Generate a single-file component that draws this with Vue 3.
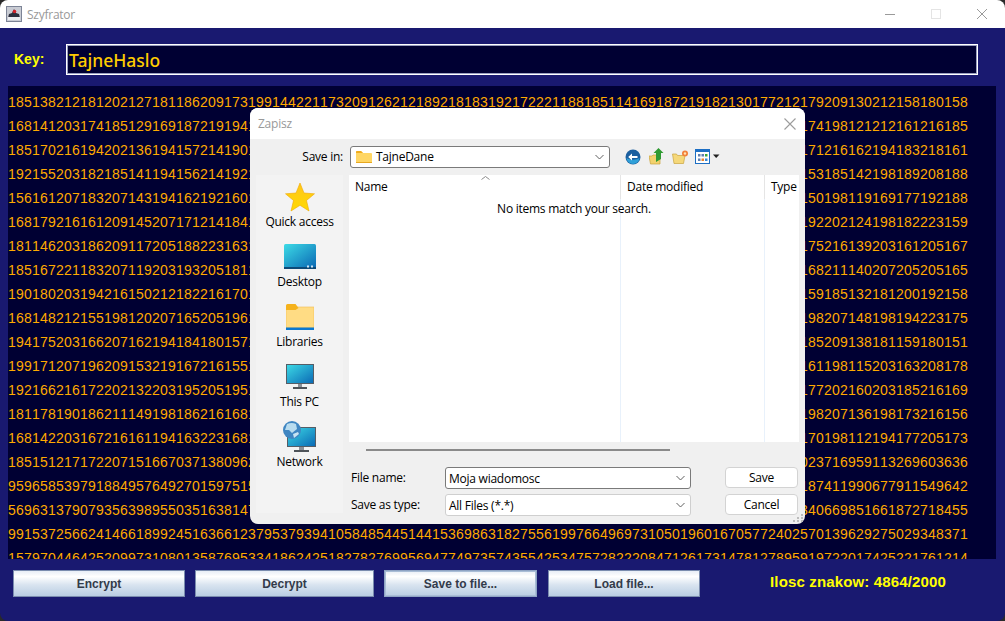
<script setup>
const top = '185138212181202127181186209173199144221173209126212189218183192172221188185114169187219182130177212179209130212158180158'
const sides = [
  ['1681412031741851291691872191941', '174198121212161216185'],
  ['1851702161942021361941572141901', '171216162194183218161'],
  ['1921552031821851411941562141921', '153185142198189208188'],
  ['1561612071832071431941621921601', '150198119169177192188'],
  ['1681792161612091452071712141841', '192202124198182223159'],
  ['1811462031862091172051882231631', '175216139203161205167'],
  ['1851672211832071192031932051811', '168211140207205205165'],
  ['1901802031942161502121822161701', '159185132181200192158'],
  ['1681482121551981202071652051961', '198207148198194223175'],
  ['1941752031662071621941841801571', '185209138181159180151'],
  ['1991712071962091532191672161551', '161198115203163208178'],
  ['1921662161722021322031952051951', '177202160203185216169'],
  ['1811781901862111491981862161681', '198207136198173216156'],
  ['1681422031672161611941632231681', '170198112194177205173'],
  ['1851512171722071516670371380962', '023716959113269603636'],
  ['9596585397918849576492701597515', '187411990677911549642'],
  ['5696313790793563989550351638147', '340669851661872718455']
]
const lines = [
  [top],
  ...sides,
  ['991537256624146618992451636612379537939410584854451441536986318275561997664969731050196016705772402570139629275029348371'],
  ['157970446425209973108013587695334186242518278276995694774973574355425347572822208471261731478127895919722017425221761214']
]
const actions = [
  { label: 'Encrypt', cls: 'w1' },
  { label: 'Decrypt', cls: 'w2' },
  { label: 'Save to file...', cls: 'w3 focus' },
  { label: 'Load file...', cls: 'w4' }
]
</script>

<template>
  <div class="win">
    <header class="titlebar">
      <svg class="appicon" width="16" height="16" viewBox="0 0 16 16">
        <rect x="0.5" y="0.5" width="15" height="15" fill="#c9ccd4" stroke="#7d8496"/>
        <path d="M2 12 L3 8 L6 7 L8 3 L10 7 L13 8 L14 12Z" fill="#2c2f3d"/>
        <rect x="2" y="11" width="12" height="3" fill="#eceef2"/>
        <circle cx="8.5" cy="5.5" r="1.8" fill="#d4222a"/>
      </svg>
      <span class="apptitle">Szyfrator</span>
      <div class="winctl">
        <svg width="12" height="12" viewBox="0 0 12 12"><path d="M1 6.5H11" stroke="#9a9a9a" stroke-width="1"/></svg>
        <svg width="12" height="12" viewBox="0 0 12 12"><rect x="1.5" y="1.5" width="9" height="9" fill="none" stroke="#e4e4e4"/></svg>
        <svg width="12" height="12" viewBox="0 0 12 12"><path d="M1 1L11 11M11 1L1 11" stroke="#9a9a9a" stroke-width="1"/></svg>
      </div>
    </header>

    <main class="main">
      <div class="keyrow">
        <label class="keylabel">Key:</label>
        <div class="keyfield">TajneHaslo</div>
      </div>

      <div class="digits">
        <div v-for="(l, i) in lines" :key="i" class="line">
          <span v-for="(part, j) in l" :key="j">{{ part }}</span>
        </div>
      </div>

      <div class="actions">
        <button v-for="a in actions" :key="a.label" class="mbtn" :class="a.cls">{{ a.label }}</button>
        <span class="count">Ilosc znakow: 4864/2000</span>
      </div>

      <section class="dlg">
        <div class="dlg-title">
          <span>Zapisz</span>
          <svg width="14" height="14" viewBox="0 0 14 14"><path d="M1.5 1.5L12.5 12.5M12.5 1.5L1.5 12.5" stroke="#9c9c9c" stroke-width="1.1"/></svg>
        </div>
        <div class="dlg-body">
          <div class="toolbar">
            <span class="savein">Save in:</span>
            <div class="combo pathcombo">
              <svg width="16" height="13" viewBox="0 0 16 13">
                <path d="M0 2a1 1 0 0 1 1-1h4l2 2h8a1 1 0 0 1 1 1v8a1 1 0 0 1-1 1H1a1 1 0 0 1-1-1Z" fill="#ffd664"/>
                <path d="M0 2a1 1 0 0 1 1-1h4l2 2H0Z" fill="#f0ac1e"/>
                <rect x="0" y="12" width="16" height="1" fill="#e8a820"/>
              </svg>
              <span class="ctext">TajneDane</span>
              <svg class="chev" width="9" height="6" viewBox="0 0 9 6"><path d="M0.5 1L4.5 5L8.5 1" fill="none" stroke="#606060"/></svg>
            </div>
            <div class="tools">
              <svg width="16" height="16" viewBox="0 0 16 16">
                <circle cx="8" cy="8" r="7.5" fill="#1c5f9f"/>
                <path d="M1.5 9a6.5 6 0 0 0 13 0a8 4 0 0 1-13 0Z" fill="#2fa0d8"/>
                <path d="M12.5 7H7V4.5L3.2 8L7 11.5V9h5.5Z" fill="#fff"/>
              </svg>
              <svg width="15" height="17" viewBox="0 0 15 17">
                <path d="M0 8h3l1-1h7v9H1.5Z" fill="#f3d26e" stroke="#c9a33e" stroke-width="0.7"/>
                <path d="M7 14V5H4.5L9.5 0L14.5 5H12v6Z" fill="#2f9a32"/>
              </svg>
              <svg width="17" height="14" viewBox="0 0 17 14">
                <path d="M0.5 4h4l1 1.5H13L11.5 13.5H2Z" fill="#f5d87a" stroke="#c9a33e" stroke-width="0.7"/>
                <circle cx="13" cy="3.5" r="3" fill="#f2803a"/>
                <circle cx="13" cy="3.5" r="1.2" fill="#ffe3b0"/>
              </svg>
              <svg class="viewicon" width="25" height="15" viewBox="0 0 25 15">
                <rect x="0.5" y="0.5" width="14" height="14" fill="#fff" stroke="#1d6fc4"/>
                <rect x="0.5" y="0.5" width="14" height="2.5" fill="#1d6fc4"/>
                <rect x="3" y="5" width="2.5" height="2.5" fill="#5f7fb0"/><rect x="6.5" y="5" width="2.5" height="2.5" fill="#5f7fb0"/><rect x="10" y="5" width="2.5" height="2.5" fill="#38a838"/>
                <rect x="3" y="9.5" width="2.5" height="2.5" fill="#5f7fb0"/><rect x="6.5" y="9.5" width="2.5" height="2.5" fill="#e8842c"/><rect x="10" y="9.5" width="2.5" height="2.5" fill="#3a8ad8"/>
                <path d="M18 5.5H24.5L21.2 9Z" fill="#222"/>
              </svg>
            </div>
          </div>

          <div class="panes">
            <nav class="places">
              <div class="place">
                <svg width="30" height="30" viewBox="0 0 30 30">
                  <defs><linearGradient id="star" x1="0" y1="0" x2="0" y2="1"><stop offset="0" stop-color="#ffc61a"/><stop offset="1" stop-color="#ffd900"/></linearGradient></defs>
                  <path d="M15 1L19 11L29.500 11.800L21.500 18.500L24 29L15 23.300L6 29L8.500 18.500L0.500 11.800L11 11Z" fill="url(#star)" stroke="#f0a800" stroke-width="0.6"/>
                </svg>
                <span>Quick access</span>
              </div>
              <div class="place">
                <svg width="32" height="26" viewBox="0 0 32 26">
                  <defs><linearGradient id="scr" x1="0" y1="0" x2="1" y2="1"><stop offset="0" stop-color="#3ddbe6"/><stop offset="1" stop-color="#0a68b4"/></linearGradient></defs>
                  <rect x="0" y="0" width="32" height="24" rx="1.500" fill="url(#scr)"/>
                  <rect x="0" y="23" width="32" height="2" fill="#0d4a78"/>
                  <rect x="23" y="21.500" width="2" height="2" fill="#cfe6f5"/><rect x="27" y="21.500" width="2" height="2" fill="#cfe6f5"/>
                </svg>
                <span>Desktop</span>
              </div>
              <div class="place">
                <svg width="28" height="26" viewBox="0 0 28 26">
                  <rect x="0" y="3" width="28" height="21" fill="#ffdc84" stroke="#f2bd52" stroke-width="0.6"/>
                  <path d="M0 1.500a1.500 1.500 0 0 1 1.500-1.500h8l3 4l-3 2H0Z" fill="#f5b21c"/>
                  <rect x="0" y="23.500" width="28" height="2.500" fill="#0a78d0"/>
                </svg>
                <span>Libraries</span>
              </div>
              <div class="place">
                <svg width="28" height="26" viewBox="0 0 28 26">
                  <rect x="0.500" y="0.500" width="27" height="19" fill="url(#scr)" stroke="#555d66"/>
                  <rect x="12" y="20" width="4" height="3" fill="#8a9098"/>
                  <rect x="7" y="23" width="14" height="2" fill="#4d5258"/>
                </svg>
                <span>This PC</span>
              </div>
              <div class="place">
                <svg width="33" height="32" viewBox="0 0 33 32">
                  <rect x="4.500" y="6.500" width="28" height="19" fill="url(#scr)" stroke="#555d66"/>
                  <rect x="16" y="26" width="5" height="3" fill="#8a9098"/>
                  <rect x="11" y="29" width="15" height="2" fill="#4d5258"/>
                  <circle cx="9" cy="9" r="9" fill="#3f86c2"/>
                  <path d="M4 3Q9 1 13 3L14 8L9 12L6 9L2 9Z" fill="#b8dcef"/>
                  <path d="M10 13L15 11L16 13L11 17Z" fill="#c8e4f2"/>
                </svg>
                <span>Network</span>
              </div>
            </nav>

            <div class="rightcol">
              <div class="list">
                <div class="listhead">
                  <span class="c1">Name
                    <svg class="sort" width="9" height="4" viewBox="0 0 9 4"><path d="M0.500 3.500L4.500 0.500L8.500 3.500" fill="none" stroke="#8a8a8a"/></svg>
                  </span>
                  <span class="c2">Date modified</span>
                  <span class="c3">Type</span>
                </div>
                <div class="listbody">
                  <i class="sep s1"></i><i class="sep s2"></i>
                  <p class="empty">No items match your search.</p>
                </div>
              </div>
              <div class="hscroll"></div>
              <div class="form">
                <span class="flabel">File name:</span>
                <div class="combo focused"><span>Moja wiadomosc</span>
                  <svg class="chev" width="9" height="6" viewBox="0 0 9 6"><path d="M0.500 1L4.500 5L8.500 1" fill="none" stroke="#606060"/></svg>
                </div>
                <button class="dbtn">Save</button>
                <span class="flabel">Save as type:</span>
                <div class="combo soft"><span>All Files (*.*)</span>
                  <svg class="chev" width="9" height="6" viewBox="0 0 9 6"><path d="M0.500 1L4.500 5L8.500 1" fill="none" stroke="#606060"/></svg>
                </div>
                <button class="dbtn">Cancel</button>
              </div>
            </div>
          </div>
          <svg class="grip" width="11" height="9" viewBox="0 0 11 9">
            <g fill="#bcbcbc"><rect x="8" y="0" width="2" height="2"/><rect x="4" y="3" width="2" height="2"/><rect x="8" y="3" width="2" height="2"/><rect x="0" y="6" width="2" height="2"/><rect x="4" y="6" width="2" height="2"/><rect x="8" y="6" width="2" height="2"/></g>
          </svg>
        </div>
      </section>
    </main>
  </div>
</template>

<style>
html, body { margin: 0; background: #2a2a2a; }
</style>

<style scoped>
.win {
  width: 1005px; height: 621px; display: flex; flex-direction: column;
  border-radius: 8px; overflow: hidden; position: relative;
  font-family: "Open Sans", "Noto Sans", sans-serif;
}
.titlebar {
  height: 28px; background: #fff; display: flex; align-items: center; padding-left: 6px; flex: none;
}
.appicon { margin-right: 5px; }
.apptitle { font-size: 12px; color: #999; letter-spacing: -0.25px; }
.winctl { margin-left: auto; display: flex; gap: 34px; padding-right: 17px; }
.main {
  flex: 1; background: #191970; display: flex; flex-direction: column; position: relative;
}
.keyrow { display: flex; align-items: center; padding: 16px 27px 0 14px; height: 31px; }
.keylabel { width: 52px; font: bold 14px "Liberation Sans", sans-serif; color: #ffff00; position: relative; bottom: 1px; }
.keyfield {
  flex: 1; height: 31px; box-sizing: border-box; background: #000033;
  border: 1px solid #fff; outline: 1px solid #9a9fc0; outline-offset: -2px;
  color: #ffcc00; font-size: 17.5px; font-weight: 500; line-height: 31px; padding-left: 2px;
  font-family: "Noto Sans", sans-serif;
}
.digits {
  margin: 11px 9px 0 8px; height: 473px; padding-top: 4px; box-sizing: border-box;
  background: #000033; overflow: hidden;
  font: 14px/24px "Liberation Sans", sans-serif; color: #ffaa00;
}
.line {
  height: 24px; width: 960px; display: flex; justify-content: space-between;
  white-space: nowrap; letter-spacing: 0.214px; font-kerning: none;
}
.actions { display: flex; align-items: center; padding: 11px 0 0 13px; gap: 10px; }
.mbtn {
  height: 27px; box-sizing: border-box; padding: 0;
  border: 1px solid #7a8cae;
  background: linear-gradient(#e8eef6 0%, #ffffff 22%, #d9e4f0 55%, #b9cde2 100%);
  font: bold 12px "Liberation Sans", sans-serif; color: #333b4a;
}
.w1 { width: 172px; } .w2 { width: 179px; } .w3 { width: 153px; } .w4 { width: 152px; margin-left: 1px; }
.focus { box-shadow: inset 0 0 0 1px #a9bdd6; border-color: #8fa4c4; }
.count { margin-left: 60px; font: bold 15px "Liberation Sans", sans-serif; color: #ffff00; position: relative; bottom: 2px; letter-spacing: 0.15px; }

.dlg {
  position: absolute; left: 250px; top: 80px; width: 555px; height: 416px;
  background: #f0f0f0; border-radius: 8px; overflow: hidden; display: flex; flex-direction: column;
  font-size: 12px; color: #000; letter-spacing: -0.25px;
}
.dlg-title {
  height: 31px; background: #fff; display: flex; align-items: center; justify-content: space-between;
  padding: 0 8px; color: #999; flex: none;
}
.dlg-body { flex: 1; position: relative; padding: 7px 6px 0; }
.toolbar { display: flex; align-items: center; height: 21px; }
.savein { width: 87px; text-align: right; margin-right: 7px; flex: none; }
.combo {
  display: flex; align-items: center; box-sizing: border-box; height: 22px; background: #fff;
  border: 1px solid #7a7a7a; border-radius: 3px; padding: 0 5px 0 3px;
}
.chev { margin-left: auto; margin-right: 0; flex: none; }
.pathcombo { width: 260px; padding-left: 5px; }
.ctext { margin-left: 4px; }
.tools { display: flex; align-items: center; gap: 8px; margin-left: 15px; }
.viewicon { margin-left: -2px; }
.panes { display: grid; grid-template-columns: 87px 450px; column-gap: 6px; margin-top: 8px; }
.places { background: #f3f3f3; height: 338px; padding-top: 6px; box-sizing: border-box; }
.place { height: 60px; display: flex; flex-direction: column; align-items: center; }
.place svg { height: 32px; flex: none; }
.place span { line-height: 16px; margin-top: 1px; }
.rightcol { display: flex; flex-direction: column; }
.list { height: 267px; background: #fff; display: flex; flex-direction: column; }
.listhead { height: 24px; display: grid; grid-template-columns: 271px 144px 35px; flex: none; }
.listhead span { padding-left: 6px; line-height: 24px; position: relative; }
.listhead .c2, .listhead .c3 { padding-left: 7px; box-shadow: inset 1px 0 0 #e5e5e5; }
.sort { position: absolute; left: 132px; top: 1px; }
.listbody { flex: 1; position: relative; }
.sep { position: absolute; top: 0; bottom: 0; width: 1px; background: #e8f1fb; }
.s1 { left: 271px; } .s2 { left: 415px; }
.empty { margin: 2px 0 0; text-align: center; line-height: 16px; position: relative; }
.hscroll { width: 304px; height: 2px; background: #8a8a8a; margin: 7px 0 0 17px; }
.form {
  margin-top: 16px; display: grid; grid-template-columns: 96px 246px 73px; column-gap: 0;
  grid-auto-rows: auto; row-gap: 5px;
}
.flabel { padding-left: 2px; line-height: 22px; }
.focused { height: 22px; border-color: #7a7a7a; }
.soft { height: 22px; border-color: #cfcfcf; }
.dbtn {
  margin-left: 34px; width: 73px; height: 21px; box-sizing: border-box; background: #fff;
  border: 1px solid #d3d3d3; border-radius: 4px; font: 12px "Open Sans", sans-serif; color: #000; padding: 0;
  letter-spacing: -0.25px;
}
.grip { position: absolute; right: 1px; bottom: 1px; }
</style>
